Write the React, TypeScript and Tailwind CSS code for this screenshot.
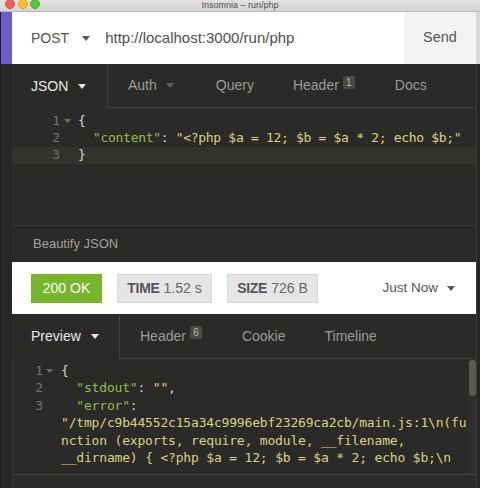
import React from "react";

const Caret = ({ color }: { color: string }) => (
  <svg width="8" height="5" viewBox="0 0 8 5" className="shrink-0">
    <path d="M0 0h8L4 5z" fill={color} />
  </svg>
);

const Fold = () => (
  <svg width="7" height="4" viewBox="0 0 7 4">
    <path d="M0 0h7L3.5 4z" fill="#6f6f6a" />
  </svg>
);

const K = ({ children }: { children: React.ReactNode }) => <span className="text-[#9dbb47]">{children}</span>;
const S = ({ children }: { children: React.ReactNode }) => <span className="text-[#ddd27f]">{children}</span>;
const P = ({ children }: { children: React.ReactNode }) => <span className="text-[#d6d6cf]">{children}</span>;

function ReqLine({ n, fold, hl, children }: { n: number; fold?: boolean; hl?: boolean; children?: React.ReactNode }) {
  return (
    <div className={hl ? "flex h-[17px] items-center bg-[#32322f]" : "flex h-[17px] items-center"}>
      <div className="w-[48px] text-right text-[#75756f]">{n}</div>
      <div className="w-[18px] flex items-center pl-[4px]">{fold ? <Fold /> : null}</div>
      <div className="whitespace-pre tracking-[-0.31px]">{children}</div>
    </div>
  );
}

function ResLine({ n, fold, children }: { n?: number; fold?: boolean; children?: React.ReactNode }) {
  return (
    <div className="flex h-[17.4px] items-center">
      <div className="w-[30px] text-right text-[#75756f]">{n ?? ""}</div>
      <div className="w-[18px] flex items-center pl-[3px]">{fold ? <Fold /> : null}</div>
      <div className="whitespace-pre tracking-[-0.18px]">{children}</div>
    </div>
  );
}

const Badge = ({ n }: { n: string }) => (
  <span className="ml-[4px] -mt-[7px] inline-flex h-[13px] min-w-[12px] items-center justify-center rounded-[2px] bg-[#4a4a47] px-[2px] text-[10px] text-[#b9b9b4]">
    {n}
  </span>
);

export default function App() {
  const sans = { fontFamily: '"Liberation Sans", Arial, sans-serif' };
  return (
    <div className="w-[480px] h-[488px] overflow-hidden flex flex-col bg-[#2a2a28]" style={sans}>
      {/* title bar */}
      <div className="relative h-[12px] shrink-0 bg-gradient-to-b from-[#e2e2e2] to-[#d4d4d4] border-b border-[#b8b8b8] flex items-center justify-center">
        <div className="absolute left-[5px] top-[-1px] flex gap-[2.5px]">
          <div className="w-[10px] h-[10px] rounded-full bg-[#f25f58] border border-[#d9463f]" />
          <div className="w-[10px] h-[10px] rounded-full bg-[#f9bd2e] border border-[#dea123]" />
          <div className="w-[10px] h-[10px] rounded-full bg-[#58c840] border border-[#3fad2c]" />
        </div>
        <span className="text-[9px] leading-none text-[#4d4d4d] -mt-[1px]">Insomnia – run/php</span>
      </div>

      <div className="flex flex-1 min-h-0">
        {/* left strip */}
        <div className="w-[12px] shrink-0 flex flex-col border-l border-[#1e1e1c]">
          <div className="h-[52px] bg-[#6b5ecb]" />
          <div className="flex-1 bg-[#272725]" />
        </div>

        {/* main */}
        <div className="w-[464px] shrink-0 flex flex-col">
          {/* URL bar */}
          <div className="h-[52px] bg-white flex items-center">
            <div className="flex items-center pl-[19px] gap-[13px] text-[14px] text-[#555]">
              <span>POST</span>
              <Caret color="#555" />
            </div>
            <div className="ml-[15px] flex-1 text-[15px] text-[#4f4f4f]">http://localhost:3000/run/php</div>
            <div className="w-[72px] h-full bg-[#f2f2f2] flex items-center justify-center text-[14.5px] text-[#555]">Send</div>
          </div>

          {/* request tabs */}
          <div className="h-[44px] flex text-[14px]">
            <div className="w-[96px] flex items-center pl-[19px] gap-[10px] text-[#e8e8e6] border-r border-[#40403d]">
              <span>JSON</span>
              <Caret color="#e8e8e6" />
            </div>
            <div className="flex-1 flex items-center border-b border-[#40403d] text-[#9b9b98]">
              <div className="flex items-center gap-[9px] pl-[20px] pr-[22px]">
                <span>Auth</span>
                <Caret color="#5f5f5c" />
              </div>
              <div className="pl-[20px] pr-[19px]">Query</div>
              <div className="flex items-center pl-[20px] pr-[20px]">
                <span>Header</span>
                <Badge n="1" />
              </div>
              <div className="pl-[20px]">Docs</div>
            </div>
          </div>

          {/* editor */}
          <div
            className="h-[118px] pt-[4.5px] text-[13px] border-b border-[#3b3b38]"
            style={{ fontFamily: '"DejaVu Sans Mono", monospace' }}
          >
            <ReqLine n={1} fold>
              <P>{"{"}</P>
            </ReqLine>
            <ReqLine n={2}>
              {"  "}
              <K>"content"</K>
              <P>: </P>
              <S>"&lt;?php $a = 12; $b = $a * 2; echo $b;"</S>
            </ReqLine>
            <ReqLine n={3} hl>
              <P>{"}"}</P>
            </ReqLine>
          </div>

          {/* beautify */}
          <div className="h-[36px] flex items-center pl-[21px] text-[13px] text-[#a2a29e]">Beautify JSON</div>

          {/* status bar */}
          <div className="h-[52px] bg-white flex items-center pl-[19px] pr-[21px] text-[14px]">
            <div className="h-[29px] w-[71px] flex items-center justify-center bg-[#76b52c] text-white">200 OK</div>
            <div className="ml-[15px] h-[29px] w-[95px] flex items-center justify-center bg-[#e5e5e5] border border-[#d8d8d8] text-[#666]">
              <span className="font-bold text-[#555] tracking-[-0.3px]">TIME</span>
              <span className="ml-[4px]">1.52 s</span>
            </div>
            <div className="ml-[15px] h-[29px] w-[91px] flex items-center justify-center bg-[#e5e5e5] border border-[#d8d8d8] text-[#666]">
              <span className="font-bold text-[#555] tracking-[-0.3px]">SIZE</span>
              <span className="ml-[4px]">726 B</span>
            </div>
            <div className="ml-auto flex items-center gap-[9px] text-[13.5px] text-[#555]">
              <span>Just Now</span>
              <Caret color="#555" />
            </div>
          </div>

          {/* response tabs */}
          <div className="h-[45px] flex text-[14px]">
            <div className="w-[108px] flex items-center pl-[19px] gap-[10px] text-[#e8e8e6] border-r border-[#40403d]">
              <span>Preview</span>
              <Caret color="#e8e8e6" />
            </div>
            <div className="flex-1 flex items-center border-b border-[#40403d] text-[#9b9b98]">
              <div className="flex items-center pl-[20px] pr-[20px]">
                <span>Header</span>
                <Badge n="6" />
              </div>
              <div className="pl-[20px] pr-[20px]">Cookie</div>
              <div className="pl-[19px]">Timeline</div>
            </div>
          </div>

          {/* response code */}
          <div
            className="relative h-[116px] pt-[3px] text-[13px] border-l border-[#353533] border-b"
            style={{ fontFamily: '"DejaVu Sans Mono", monospace', borderBottomColor: "#41413e" }}
          >
            <ResLine n={1} fold>
              <P>{"{"}</P>
            </ResLine>
            <ResLine n={2}>
              {"  "}
              <K>"stdout"</K>
              <P>: </P>
              <S>""</S>
              <P>,</P>
            </ResLine>
            <ResLine n={3}>
              {"  "}
              <K>"error"</K>
              <P>:</P>
            </ResLine>
            <ResLine>
              <S>"/tmp/c9b44552c15a34c9996ebf23269ca2cb/main.js:1\n(fu</S>
            </ResLine>
            <ResLine>
              <S>nction (exports, require, module, __filename,</S>
            </ResLine>
            <ResLine>
              <S>__dirname) {"{"} &lt;?php $a = 12; $b = $a * 2; echo $b;\n</S>
            </ResLine>
            <div className="absolute right-0 top-0 bottom-0 w-[8px] bg-[#2e2e2c]">
              <div className="mx-auto mt-[1px] w-[7px] h-[36px] rounded-[4px] bg-[#5a5a57]" />
            </div>
          </div>
          <div className="flex-1 border-l border-[#353533]" />
        </div>

        {/* right edge */}
        <div className="flex-1 flex flex-col">
          <div className="h-[52px] bg-[#d9d9d9]" />
          <div className="flex-1 bg-[#262624] border-l border-[#3a3a37]" />
        </div>
      </div>
    </div>
  );
}
